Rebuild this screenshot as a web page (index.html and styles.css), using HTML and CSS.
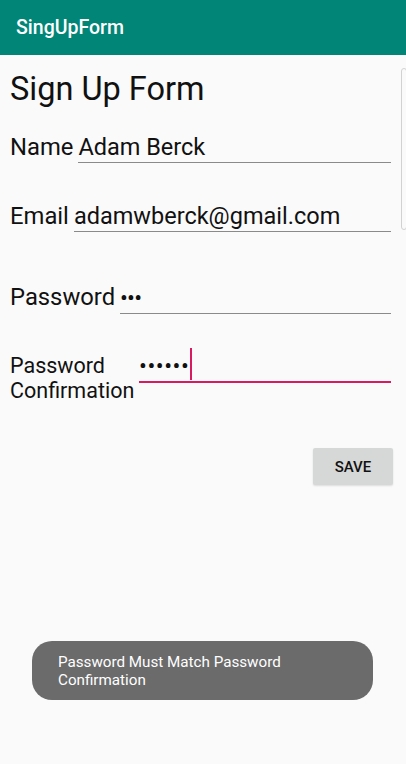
FILE: index.html
```html
<!DOCTYPE html>
<html>
<head>
<meta charset="utf-8">
<link rel="stylesheet" href="styles.css">
</head>
<body>
<header class="appbar">SingUpForm</header>
<main class="content">
  <h1 class="title">Sign Up Form</h1>
  <div class="row row-name">
    <span class="label">Name</span>
    <span class="field">Adam Berck</span>
  </div>
  <div class="row row-email">
    <span class="label">Email</span>
    <span class="field">adamwberck@gmail.com</span>
  </div>
  <div class="row row-pass">
    <span class="label">Password</span>
    <span class="field"><span class="dots dots-small">•••</span></span>
  </div>
  <div class="row row-conf">
    <span class="label label-wrap">Password Confirmation</span>
    <span class="field field-active"><span class="dots">••••••</span><span class="cursor"></span></span>
  </div>
  <div class="actions">
    <button class="save">SAVE</button>
  </div>
</main>
<div class="scrollbar"></div>
<div class="toast">Password Must Match Password Confirmation</div>
</body>
</html>
```

FILE: styles.css
```css
html, body {
  margin: 0;
  padding: 0;
}
body {
  width: 406px;
  height: 764px;
  background: #fafafa;
  font-family: Roboto, "Liberation Sans", sans-serif;
  color: #111;
  position: relative;
  overflow: hidden;
}
.appbar {
  height: 55px;
  background: #008577;
  color: #fff;
  font-size: 19.5px;
  font-weight: 500;
  line-height: 55px;
  padding-left: 16px;
}
.content {
  padding: 0 15px 0 10px;
}
.title {
  margin: 15px 0 0 0;
  font-size: 32.5px;
  font-weight: 400;
  line-height: 38px;
}
.row {
  display: flex;
  align-items: baseline;
  gap: 5px;
}
.row-name { margin-top: 26px; }
.row-email { margin-top: 40px; }
.row-pass { margin-top: 52px; }
.row-conf { margin-top: 34px; }
.label {
  font-size: 23.8px;
  line-height: 25px;
  white-space: nowrap;
}
.label-wrap {
  white-space: normal;
  width: min-content;
  font-size: 21.5px;
}
.field {
  flex: 1;
  font-size: 23.5px;
  line-height: 26px;
  padding-bottom: 2px;
  border-bottom: 1px solid #8a8a8a;
  white-space: nowrap;
  position: relative;
}
.field-active {
  border-bottom: 2px solid #d81b60;
  padding-bottom: 1px;
}
.dots {
  font-size: 20px;
  letter-spacing: 1.2px;
  font-weight: 700;
}
.dots-small {
  letter-spacing: 0;
}
.cursor {
  display: inline-block;
  width: 2px;
  height: 32px;
  background: #d81b60;
  vertical-align: -7px;
  margin-left: 0;
}
.actions {
  display: flex;
  justify-content: flex-end;
  margin-top: 45px;
}
.save {
  width: 80px;
  height: 37px;
  border: none;
  border-radius: 2px;
  background: #d6d7d7;
  font-family: Roboto, "Liberation Sans", sans-serif;
  font-size: 15px;
  font-weight: 500;
  color: #111;
  box-shadow: 0 1px 2px rgba(0,0,0,0.12);
  margin-right: -2px;
}
.scrollbar {
  position: absolute;
  left: 401px;
  top: 68px;
  width: 6px;
  height: 162px;
  border: 1px solid #d2d2d2;
  border-radius: 3px;
  box-sizing: border-box;
}
.toast {
  position: absolute;
  left: 32px;
  top: 641px;
  width: 341px;
  height: 59px;
  box-sizing: border-box;
  padding: 12px 60px 0 26px;
  border-radius: 20px;
  background: #6b6b6b;
  color: #fff;
  font-size: 15.2px;
  line-height: 18px;
}
```
